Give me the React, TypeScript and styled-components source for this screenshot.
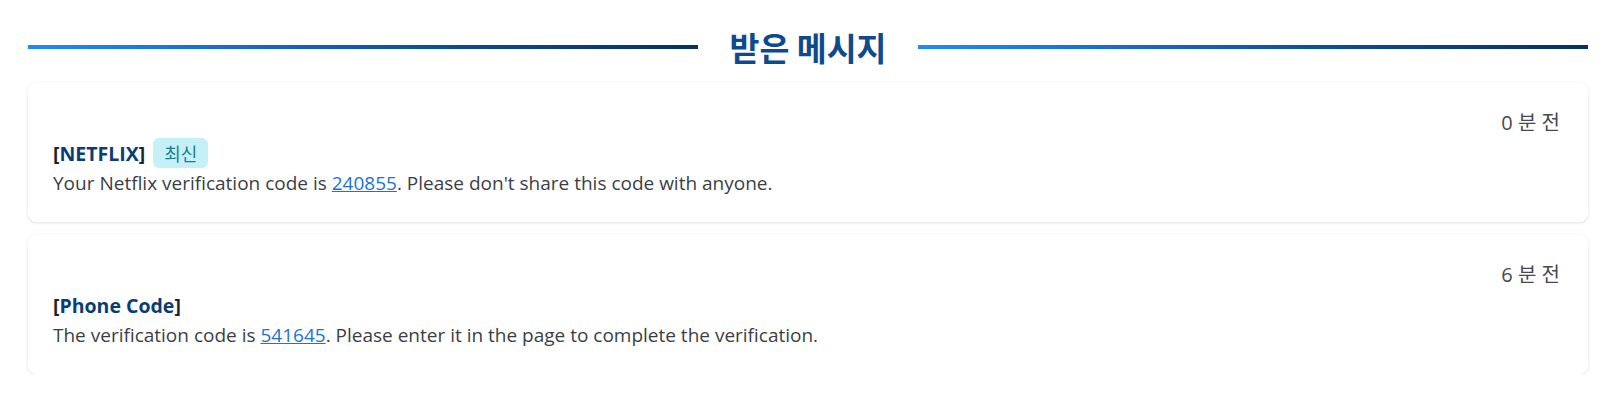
import React from 'react';
import styled, { createGlobalStyle } from 'styled-components';

const GlobalStyle = createGlobalStyle`
  body {
    margin: 0;
    background: #ffffff;
    font-family: "Open Sans", "Noto Sans CJK KR", sans-serif;
    color: #3a3f47;
  }
`;

type Message = {
  id: number;
  sender: string;
  before: string;
  code: string;
  after: string;
  minutes: number;
  latest?: boolean;
};

const messages: Message[] = [
  {
    id: 1,
    sender: 'NETFLIX',
    before: 'Your Netflix verification code is ',
    code: '240855',
    after: ". Please don't share this code with anyone.",
    minutes: 0,
    latest: true,
  },
  {
    id: 2,
    sender: 'Phone Code',
    before: 'The verification code is ',
    code: '541645',
    after: '. Please enter it in the page to complete the verification.',
    minutes: 6,
  },
];

const App = () => {
  return (
    <>
      <GlobalStyle />
      <Page>
        <Heading>
          <Line />
          <Title>받은 메시지</Title>
          <Line />
        </Heading>
        <List>
          {messages.map((m) => (
            <Card key={m.id}>
              <Time>{m.minutes} 분 전</Time>
              <SenderRow>
                <Sender>
                  [<SenderName>{m.sender}</SenderName>]
                </Sender>
                {m.latest && <Badge>최신</Badge>}
              </SenderRow>
              <Body>
                {m.before}
                <Code href="#">{m.code}</Code>
                {m.after}
              </Body>
            </Card>
          ))}
        </List>
      </Page>
    </>
  );
};

export default App;

const Page = styled.div`
  padding: 27px 34px 0 28px;
`;

const Heading = styled.div`
  display: flex;
  align-items: center;
  gap: 32px;
  height: 40px;
  margin-bottom: 15px;
`;

const Line = styled.div`
  flex: 1;
  height: 4px;
  background: linear-gradient(90deg, #1e8cf5 0%, #0b4f9c 60%, #0a2f60 100%);
`;

const Title = styled.h2`
  margin: 0;
  font-family: "Noto Sans CJK KR", sans-serif;
  font-size: 32.5px;
  font-weight: 700;
  line-height: 40px;
  color: #0d4a8e;
`;

const List = styled.div`
  display: flex;
  flex-direction: column;
  gap: 12px;
`;

const Card = styled.div`
  display: flex;
  flex-direction: column;
  height: 140px;
  box-sizing: border-box;
  padding: 28px 28px 0 25px;
  background: #ffffff;
  border-radius: 8px;
  box-shadow: 0 1px 3px rgba(0, 0, 0, 0.12), 0 0 1px rgba(0, 0, 0, 0.06);
`;

const Time = styled.div`
  align-self: flex-end;
  font-size: 20px;
  line-height: 26px;
  color: #444a52;
`;

const SenderRow = styled.div`
  display: flex;
  align-items: center;
  gap: 8px;
  height: 30px;
  margin-top: 2px;
`;

const Sender = styled.span`
  font-size: 19.5px;
  font-weight: 700;
  color: #1f232a;
`;

const SenderName = styled.span`
  color: #0a3d75;
`;

const Badge = styled.span`
  display: inline-flex;
  align-items: center;
  justify-content: center;
  width: 55px;
  height: 30px;
  border-radius: 6px;
  background: #c6f0f8;
  color: #16808e;
  font-size: 18px;
`;

const Body = styled.p`
  margin: 2px 0 0;
  font-size: 19px;
  line-height: 26px;
  color: #3a3f47;
`;

const Code = styled.a`
  color: #1a73d9;
  text-decoration: underline;
`;
